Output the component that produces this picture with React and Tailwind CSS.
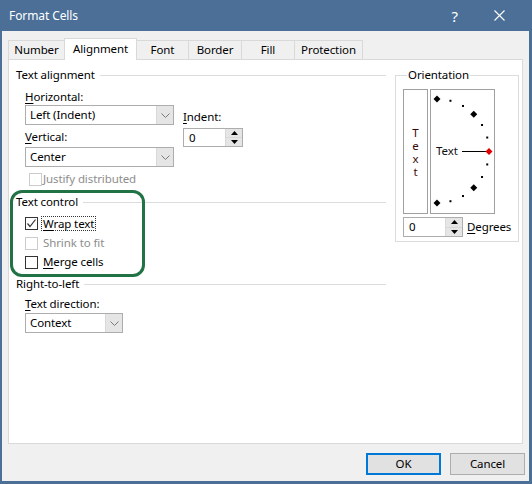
import React from 'react';

const Chevron = () => (
  <svg width="9" height="5" viewBox="0 0 9 5">
    <polyline points="0.5,0.5 4.5,4.5 8.5,0.5" fill="none" stroke="#7a7a7a" strokeWidth="1" />
  </svg>
);

const Select = ({ value, width }) => (
  <div className={`flex h-[20px] border border-[#adadad] bg-white ${width}`}>
    <div className="flex flex-1 items-center pl-[4px]">{value}</div>
    <div className="flex w-[17px] items-center justify-center border-l border-[#d9d9d9] bg-[#e5e5e5]">
      <Chevron />
    </div>
  </div>
);

const Spinner = ({ height }) => (
  <div className={`flex w-[60px] border border-[#adadad] bg-white ${height}`}>
    <div className="flex flex-1 items-center pl-[5px]">0</div>
    <div className="flex w-[17px] flex-col border-l border-[#d9d9d9]">
      <div className="flex flex-1 items-center justify-center border-b border-[#d9d9d9] bg-[#e5e5e5]">
        <svg width="7" height="4" viewBox="0 0 7 4"><polygon points="3.5,0 7,4 0,4" fill="#000" /></svg>
      </div>
      <div className="flex flex-1 items-center justify-center bg-[#e5e5e5]">
        <svg width="7" height="4" viewBox="0 0 7 4"><polygon points="0,0 7,0 3.5,4" fill="#000" /></svg>
      </div>
    </div>
  </div>
);

const Checkbox = ({ checked, disabled }) => (
  <div
    className={`flex h-[13px] w-[13px] shrink-0 items-center justify-center border bg-white ${
      disabled ? 'border-[#cccccc]' : 'border-[#333333]'
    }`}
  >
    {checked && (
      <svg width="11" height="11" viewBox="0 0 11 11">
        <polyline points="1.5,5.5 4,8.5 9.5,1.5" fill="none" stroke="#333" strokeWidth="1.2" />
      </svg>
    )}
  </div>
);

const Heading = ({ children }) => (
  <div className="flex h-[16px] items-center">
    <span>{children}</span>
    <div className="ml-[5px] h-px flex-1 bg-[#dcdcdc]" />
  </div>
);

const U = ({ children }) => <span className="underline underline-offset-2">{children}</span>;

// arc points around the pivot of the orientation dial
const cx = 6;
const cy = 61;
const r = 52;
const pt = (deg) => [cx + r * Math.cos((deg * Math.PI) / 180), cy - r * Math.sin((deg * Math.PI) / 180)];
const diamonds = [90, 45, -45, -90];
const dots = [75, 60, 30, 15, -15, -30, -60, -75];

const Diamond = ({ x, y, fill }) => (
  <polygon points={`${x},${y - 3.5} ${x + 3.5},${y} ${x},${y + 3.5} ${x - 3.5},${y}`} fill={fill} />
);

export default function App() {
  return (
    <div className="h-[484px] w-[532px] font-['Noto_Sans',sans-serif] text-[11.5px] leading-[16px] tracking-[-0.1px] text-black">
      {/* Title bar */}
      <div className="flex h-[31px] items-center bg-[#4b6f96] pl-[9px] text-white">
        <span className="text-[12px]">Format Cells</span>
        <span className="ml-auto mr-[36px] text-[15px]">?</span>
        <svg className="mr-[27px]" width="11" height="11" viewBox="0 0 11 11">
          <path d="M0.5 0.5 L10.5 10.5 M10.5 0.5 L0.5 10.5" stroke="#fff" strokeWidth="1.1" />
        </svg>
      </div>

      {/* Body */}
      <div className="flex h-[453px] flex-col border-b-[3px] border-l-2 border-r-[3px] border-[#4b6f96] bg-[#f0f0f0]">
        {/* Tabs */}
        <div className="ml-[6px] mt-[7px] flex h-[21px] items-end">
          <div className="flex h-[19px] w-[56px] items-center justify-center border-l border-t border-[#d9d9d9]">Number</div>
          <div className="relative z-10 -mb-px flex h-[22px] w-[73px] items-start justify-center border-l border-r border-t border-[#d9d9d9] bg-white pt-[2px]">
            Alignment
          </div>
          <div className="flex h-[19px] w-[51px] items-center justify-center border-t border-[#d9d9d9]">Font</div>
          <div className="flex h-[19px] w-[53px] items-center justify-center border-l border-t border-[#d9d9d9]">Border</div>
          <div className="flex h-[19px] w-[53px] items-center justify-center border-l border-t border-[#d9d9d9]">Fill</div>
          <div className="flex h-[19px] w-[69px] items-center justify-center border-l border-r border-t border-[#d9d9d9]">Protection</div>
        </div>

        {/* Panel */}
        <div className="relative ml-[6px] flex h-[385px] w-[515px] border border-[#d9d9d9] bg-white pl-[7px] pt-[7px]">
          {/* Left column */}
          <div className="w-[370px]">
            <Heading>Text alignment</Heading>
            <div className="flex pl-[9px]">
              <div className="w-[149px]">
                <div className="mt-[6px]"><U>H</U>orizontal:</div>
                <Select value="Left (Indent)" width="w-[149px]" />
                <div className="mt-[4px]"><U>V</U>ertical:</div>
                <div className="mt-[2px]">
                  <Select value="Center" width="w-[149px]" />
                </div>
              </div>
              <div className="ml-[9px] pt-[26px]">
                <div><U>I</U>ndent:</div>
                <div className="mt-[3px]">
                  <Spinner height="h-[19px]" />
                </div>
              </div>
            </div>
            <div className="mt-[4px] flex h-[16px] items-center gap-[1px] pl-[13px] text-[#8d8d8d]">
              <Checkbox disabled />
              <span>Justify distributed</span>
            </div>

            <div className="mt-[7px]">
              <Heading>Text control</Heading>
            </div>
            <div className="mt-[5px] flex h-[16px] items-center gap-[3px] pl-[9px]">
              <Checkbox checked />
              <span className="border border-dotted border-[#333] px-px leading-[13px]"><U>W</U>rap text</span>
            </div>
            <div className="mt-[4px] flex h-[16px] items-center gap-[5px] pl-[9px] text-[#8d8d8d]">
              <Checkbox disabled />
              <span>Shrink to fit</span>
            </div>
            <div className="mt-[3px] flex h-[16px] items-center gap-[5px] pl-[9px]">
              <Checkbox />
              <span><U>M</U>erge cells</span>
            </div>

            <div className="mt-[6px]">
              <Heading>Right-to-left</Heading>
            </div>
            <div className="mt-[4px] pl-[9px]"><U>T</U>ext direction:</div>
            <div className="mt-[1px] pl-[9px]">
              <Select value="Context" width="w-[98px]" />
            </div>
          </div>

          {/* Orientation */}
          <fieldset className="ml-[9px] h-[175px] w-[121px] border border-[#dcdcdc] px-[7px] pb-[4px]">
            <legend className="ml-[4px] px-px">Orientation</legend>
            <div className="mt-[6px] flex gap-[2px]">
              <div className="flex h-[125px] w-[25px] flex-col items-center justify-center border border-[#a0a0a0] text-[11.5px] leading-[13px] text-[#3a0a0a]">
                <span className="block h-[13px]">T</span>
                <span className="block h-[13px]">e</span>
                <span className="block h-[13px]">x</span>
                <span className="block h-[13px]">t</span>
              </div>
              <div className="relative h-[125px] w-[65px] border border-[#a0a0a0]">
                <svg className="absolute left-0 top-0" width="63" height="123" viewBox="0 0 63 123">
                  {diamonds.map((d) => {
                    const [x, y] = pt(d);
                    return <Diamond key={d} x={x} y={y} fill="#000" />;
                  })}
                  {dots.map((d) => {
                    const [x, y] = pt(d);
                    return <rect key={d} x={x - 1} y={y - 1} width="2" height="2" fill="#000" />;
                  })}
                  <line x1="31" y1="61.5" x2="55" y2="61.5" stroke="#000" strokeWidth="1" />
                  <Diamond x={58} y={61.5} fill="#e00000" />
                </svg>
                <span className="absolute left-[5px] top-[53px] text-[#111]">Text</span>
              </div>
            </div>
            <div className="mt-[3px] flex items-center gap-[4px]">
              <Spinner height="h-[20px]" />
              <span><U>D</U>egrees</span>
            </div>
          </fieldset>

          {/* highlight around Text control */}
          <div className="absolute left-px top-[130px] h-[87px] w-[135px] rounded-[12px] border-[3px] border-[#217346]" />
        </div>

        {/* Buttons */}
        <div className="mt-[9px] flex justify-end gap-[9px] pr-[4px]">
          <div className="flex h-[22px] w-[75px] items-center justify-center border-2 border-[#0078d7] bg-[#e1e1e1]">OK</div>
          <div className="flex h-[22px] w-[75px] items-center justify-center border border-[#adadad] bg-[#e1e1e1]">Cancel</div>
        </div>
      </div>
    </div>
  );
}
